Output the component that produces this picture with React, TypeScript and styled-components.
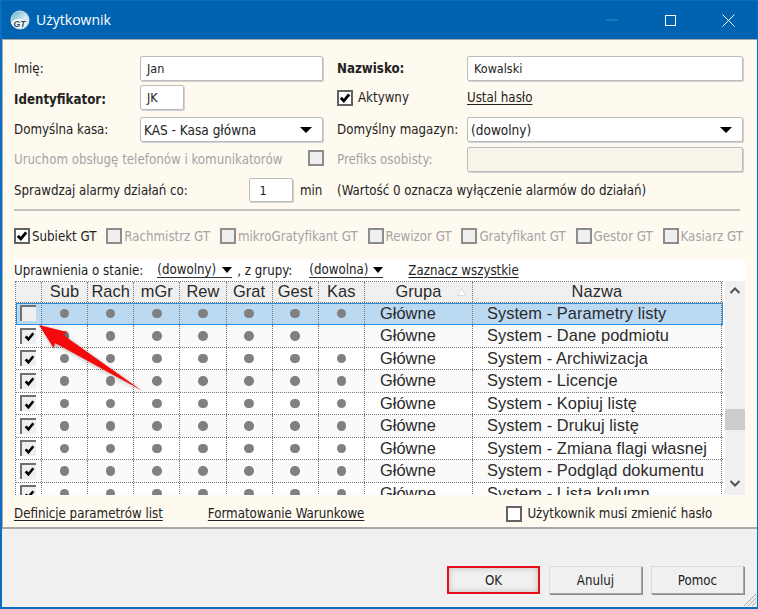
import React from "react";
import styled, { createGlobalStyle } from "styled-components";

const Global = createGlobalStyle`
  html, body { margin: 0; padding: 0; overflow: hidden; background: #f0f0f0; }
  * { box-sizing: border-box; }
`;

const UI = `"DejaVu Sans Condensed", "DejaVu Sans", sans-serif`;
const GRID = `"Liberation Sans", Arial, sans-serif`;

const Win = styled.div`
  position: relative;
  width: 758px;
  height: 609px;
  display: flex;
  flex-direction: column;
  border: solid #0a6fc2;
  border-width: 1px 1px 2px 2px;
  background: #f0f0f0;
  font-family: ${UI};
  font-size: 13.2px;
  color: #222;
  overflow: hidden;
`;
const TitleBar = styled.div`
  height: 38px;
  flex: none;
  background: #0063b1;
  color: #fff;
  display: flex;
  align-items: center;
  padding-left: 8px;
`;
const TitleText = styled.span`
  font-family: "Open Sans", sans-serif;
  font-size: 14px;
  margin: -2px 0 0 6px;
  flex: 1;
`;
const WinBtn = styled.div`
  width: 58px;
  height: 38px;
  display: flex;
  align-items: center;
  justify-content: center;
`;
const Panel = styled.div`
  flex: none;
  height: 490px;
  background: #fffaf0;
  border: 1px solid #a8a8a8;
  border-width: 1px 0 2px 1px;
  display: flex;
  flex-direction: column;
  padding: 16px 12px 0 11px;
`;
const Form = styled.div`
  display: grid;
  grid-template-columns: 126px 183px 14px 130px 276px;
  grid-template-rows: 29px 32px 30px 31px 24px;
  width: 729px;
`;
const Label = styled.div<{ $bold?: boolean; $off?: boolean; $dy?: number; $w?: number; $wide?: boolean }>`
  height: 24px;
  line-height: 25px;
  white-space: nowrap;
  font-weight: ${(p) => (p.$bold ? 700 : 400)};
  color: ${(p) => (p.$off ? "#a4a4a4" : "#222")};
  margin-top: ${(p) => p.$dy ?? 0}px;
  ${(p) => (p.$w ? `width: ${p.$w}px;` : "")}
  ${(p) => (p.$wide ? "grid-column: 4 / span 2;" : "")}
`;
const Field = styled.div<{ $w?: number; $off?: boolean }>`
  height: 100%;
  max-height: 25px;
  width: ${(p) => (p.$w ? `${p.$w}px` : "100%")};
  background: ${(p) => (p.$off ? "#f8f4ea" : "#fff")};
  border: 1px solid #bcbcbc;
  border-radius: 2px;
  box-shadow: 1px 1px 0 #d0d0d0;
  padding: 0 6px;
  display: flex;
  align-items: center;
  font-size: 12.5px;
  white-space: nowrap;
`;
const SelectField = styled(Field)`
  padding: 0 10px 0 3px;
  justify-content: space-between;
  font-size: 13.5px;
`;
const Arrow = styled.span`
  width: 0;
  height: 0;
  border-left: 6px solid transparent;
  border-right: 6px solid transparent;
  border-top: 6px solid #000;
`;
const Span2 = styled.div<{ $between?: boolean }>`
  grid-column: span 3;
  display: flex;
  align-items: flex-start;
  justify-content: ${(p) => (p.$between ? "space-between" : "flex-start")};
  padding-right: ${(p) => (p.$between ? "13px" : 0)};
`;
const Row = styled.div<{ $ml?: number }>`
  display: flex;
  align-items: center;
  gap: 5px;
  height: 25px;
  white-space: nowrap;
  margin-left: ${(p) => p.$ml ?? 0}px;
`;
const Box = styled.span<{ $off?: boolean; $dy?: number }>`
  width: 16px;
  height: 16px;
  flex: none;
  border: 2.5px solid ${(p) => (p.$off ? "#8c8c8c" : "#626262")};
  background: ${(p) => (p.$off ? "#efefef" : "#fff")};
  display: inline-flex;
  align-items: center;
  justify-content: center;
  margin-top: ${(p) => p.$dy ?? 0}px;
`;
const A = styled.span`
  text-decoration: underline;
  text-underline-offset: 2px;
  white-space: nowrap;
  color: #222;
`;
const Sep = styled.div`
  height: 2px;
  width: 726px;
  margin: 7px 0 0 0;
  background: #c4c4bc;
`;
const Modules = styled.div`
  display: flex;
  justify-content: space-between;
  width: 729px;
  margin-top: 16px;
  height: 19px;
`;
const Mod = styled.div<{ $off?: boolean }>`
  display: flex;
  align-items: center;
  gap: 2px;
  white-space: nowrap;
  color: ${(p) => (p.$off ? "#a4a4a4" : "#222")};
`;
const White = styled.div`
  margin-top: 14px;
  width: 731px;
  background: #fff;
  display: flex;
  flex-direction: column;
`;
const Tools = styled.div`
  height: 21px;
  background: #fff;
  display: flex;
  align-items: center;
  white-space: nowrap;
`;
const DropLink = styled.span<{ $w: number; $ml: number }>`
  width: ${(p) => p.$w}px;
  margin-left: ${(p) => p.$ml}px;
  border-bottom: 1.5px solid #333;
  display: inline-flex;
  align-items: center;
  justify-content: space-between;
  line-height: 15px;
`;
const MiniArrow = styled.span`
  width: 0;
  height: 0;
  border-left: 5px solid transparent;
  border-right: 5px solid transparent;
  border-top: 6px solid #000;
`;
const Plain = styled.span<{ $ml?: number }>`
  margin-left: ${(p) => p.$ml ?? 0}px;
`;
const LinkAt = styled(A)<{ $ml: number }>`
  margin-left: ${(p) => p.$ml}px;
`;
const ListArea = styled.div`
  display: flex;
  height: 214px;
  gap: 2px;
  padding-left: 1px;
`;
const Table = styled.div`
  width: 708px;
  height: 214px;
  overflow: hidden;
  font-family: ${GRID};
  font-size: 16.4px;
  letter-spacing: 0.08px;
  color: #2a2a2a;
  border-left: 1px dotted #777;
  border-top: 1px dotted #777;
`;
const TR = styled.div<{ $sel?: boolean; $alt?: boolean; $head?: boolean }>`
  display: grid;
  grid-template-columns: 26px repeat(7, 46.14px) 108px 249px;
  height: ${(p) => (p.$head ? "21px" : "22.5px")};
  background: ${(p) => (p.$head ? "#f0f0f0" : p.$sel ? "#bcd9f2" : p.$alt ? "#fafafa" : "#fff")};
  ${(p) => (p.$sel ? "outline: 1px solid #2b8de0; outline-offset: -1px;" : "")}
  border-bottom: 1px dotted #777;
`;
const TD = styled.div<{ $left?: boolean; $pl?: number }>`
  position: relative;
  border-right: 1px dotted #777;
  display: flex;
  align-items: center;
  justify-content: ${(p) => (p.$left ? "flex-start" : "center")};
  padding-left: ${(p) => p.$pl ?? 0}px;
  white-space: nowrap;
  overflow: hidden;
`;
const Dot = styled.span`
  width: 9.5px;
  height: 9.5px;
  border-radius: 50%;
  background: #808080;
`;
const Tick = styled.span`
  width: 16px;
  height: 16px;
  border: solid #707070;
  border-width: 2.5px 0 0 2.5px;
  background: #efefef;
  display: flex;
  align-items: center;
  justify-content: center;
`;
const Sort = styled.svg`
  position: absolute;
  right: 6px;
  top: 6px;
`;
const Scroll = styled.div`
  width: 20px;
  height: 214px;
  background: #f0f0f0;
  position: relative;
  display: flex;
  flex-direction: column;
  align-items: center;
  justify-content: space-between;
  padding: 5px 0 7px;
`;
const Thumb = styled.div`
  position: absolute;
  left: 0;
  right: 0;
  top: 128px;
  height: 21px;
  background: #cdcdcd;
`;
const Footer = styled.div`
  display: flex;
  align-items: center;
  height: 33px;
  padding-top: 6px;
`;
const Bottom = styled.div`
  flex: 1;
  display: flex;
  justify-content: flex-end;
  align-items: flex-start;
  gap: 9px;
  padding: 37px 13px 0 0;
  position: relative;
`;
const Btn = styled.div<{ $red?: boolean }>`
  width: 93px;
  height: 28px;
  background: #f0f0f0;
  border: ${(p) => (p.$red ? "2px solid #e3101a" : "1px solid #a6a6a6")};
  border-top-color: ${(p) => (p.$red ? "#e3101a" : "#dcdcdc")};
  border-left-color: ${(p) => (p.$red ? "#e3101a" : "#dcdcdc")};
  box-shadow: ${(p) => (p.$red ? "inset 0 0 6px #bdbdbd" : "1px 1px 0 #8c8c8c")};
  display: flex;
  align-items: center;
  justify-content: center;
`;
const Grip = styled.svg`
  position: absolute;
  right: 0;
  bottom: 0;
`;
const Overlay = styled.svg`
  position: absolute;
  left: -2px;
  top: -1px;
  pointer-events: none;
  filter: drop-shadow(2px 2px 2px rgba(0, 0, 0, 0.3));
`;

const Check = ({ s = 12 }: { s?: number }) => (
  <svg width={s} height={s} viewBox="0 0 12 12">
    <path d="M1.800 5.800 L4.800 9 L10.200 2.400" fill="none" stroke="#000" strokeWidth="2.800" />
  </svg>
);

const Logo = () => (
  <svg width="20" height="20" viewBox="0 0 21 21">
    <defs>
      <linearGradient id="lg" x1="0" y1="0" x2="1" y2="1">
        <stop offset="0" stopColor="#4fb0c8" />
        <stop offset="0.55" stopColor="#cfe6ee" />
        <stop offset="1" stopColor="#f4f4f4" />
      </linearGradient>
    </defs>
    <circle cx="10.500" cy="10.500" r="9.500" fill="url(#lg)" stroke="#d8dde0" />
    <ellipse cx="9" cy="14" rx="7.500" ry="4.600" fill="#f3f3f3" />
    <text x="10" y="17.500" fontSize="9" fontWeight="700" fontStyle="italic" fontFamily="Liberation Sans" textAnchor="middle" fill="#2c4a66">GT</text>
  </svg>
);

const names = [
  "Parametry listy",
  "Dane podmiotu",
  "Archiwizacja",
  "Licencje",
  "Kopiuj listę",
  "Drukuj listę",
  "Zmiana flagi własnej",
  "Podgląd dokumentu",
  "Lista kolumn",
];
const heads = ["Sub", "Rach", "mGr", "Rew", "Grat", "Gest", "Kas"];
const mods = ["Rachmistrz GT", "mikroGratyfikant GT", "Rewizor GT", "Gratyfikant GT", "Gestor GT", "Kasiarz GT"];

export default function App() {
  return (
    <>
      <Global />
      <Win>
        <TitleBar>
          <Logo />
          <TitleText>Użytkownik</TitleText>
          <WinBtn>
            <svg width="12" height="12" viewBox="0 0 12 12"><path d="M0 6h12" stroke="#3d8ac6" /></svg>
          </WinBtn>
          <WinBtn>
            <svg width="11" height="11" viewBox="0 0 11 11"><rect x="0.500" y="0.500" width="10" height="10" fill="none" stroke="#fff" /></svg>
          </WinBtn>
          <WinBtn>
            <svg width="13" height="13" viewBox="0 0 13 13"><path d="M.5.5l12 12M12.500.5l-12 12" stroke="#fff" /></svg>
          </WinBtn>
        </TitleBar>
        <Panel>
          <Form>
            <Label>Imię:</Label>
            <Field>Jan</Field>
            <span />
            <Label $bold>Nazwisko:</Label>
            <Field>Kowalski</Field>

            <Label $bold $dy={2}>Identyfikator:</Label>
            <Field $w={44}>JK</Field>
            <span />
            <Row>
              <Box><Check /></Box>
              <span>Aktywny</span>
            </Row>
            <Row><A>Ustal hasło</A></Row>

            <Label>Domyślna kasa:</Label>
            <SelectField>KAS - Kasa główna<Arrow /></SelectField>
            <span />
            <Label>Domyślny magazyn:</Label>
            <SelectField>(dowolny)<Arrow /></SelectField>

            <Span2 $between>
              <Label $off>Uruchom obsługę telefonów i komunikatorów</Label>
              <Box $off $dy={3} />
            </Span2>
            <Label $off>Prefiks osobisty:</Label>
            <Field $off />

            <Span2>
              <Label $w={235}>Sprawdzaj alarmy działań co:</Label>
              <Field $w={44}>&nbsp;1</Field>
              <Plain $ml={7}><Label>min</Label></Plain>
            </Span2>
            <Label $wide>(Wartość 0 oznacza wyłączenie alarmów do działań)</Label>
          </Form>
          <Sep />
          <Modules>
            <Mod>
              <Box><Check /></Box>
              Subiekt GT
            </Mod>
            {mods.map((m) => (
              <Mod $off key={m}>
                <Box $off />
                {m}
              </Mod>
            ))}
          </Modules>
          <White>
            <Tools>
              <Plain>Uprawnienia o stanie:</Plain>
              <DropLink $w={75} $ml={14}>(dowolny)<MiniArrow /></DropLink>
              <Plain $ml={5}>, z grupy:</Plain>
              <DropLink $w={74} $ml={17}>(dowolna)<MiniArrow /></DropLink>
              <LinkAt $ml={25}>Zaznacz wszystkie</LinkAt>
            </Tools>
            <ListArea>
              <Table>
                <TR $head>
                  <TD />
                  {heads.map((h) => <TD key={h}>{h}</TD>)}
                  <TD>
                    Grupa
                    <Sort width="9" height="8" viewBox="0 0 9 8"><path d="M4.500 0.500L8.500 7.500H0.500Z" fill="#fff" stroke="#d8d8d8" /></Sort>
                  </TD>
                  <TD>Nazwa</TD>
                </TR>
                {names.map((n, i) => (
                  <TR key={n} $sel={i === 0} $alt={i % 2 === 1}>
                    <TD $left $pl={4}>
                      <Tick>{i > 0 && <Check s={11} />}</Tick>
                    </TD>
                    {heads.map((h) => (
                      <TD key={h}>{i === 1 && h === "Kas" ? null : <Dot />}</TD>
                    ))}
                    <TD $left $pl={15}>Główne</TD>
                    <TD $left $pl={14}>System - {n}</TD>
                  </TR>
                ))}
              </Table>
              <Scroll>
                <svg width="12" height="9" viewBox="0 0 12 9"><path d="M1.500 7L6 2.500L10.500 7" fill="none" stroke="#505050" strokeWidth="2" /></svg>
                <Thumb />
                <svg width="12" height="9" viewBox="0 0 12 9"><path d="M1.500 2L6 6.500L10.500 2" fill="none" stroke="#505050" strokeWidth="2" /></svg>
              </Scroll>
            </ListArea>
          </White>
          <Footer>
            <A>Definicje parametrów list</A>
            <LinkAt $ml={45}>Formatowanie Warunkowe</LinkAt>
            <Row $ml={142}>
              <Box />
              <span>Użytkownik musi zmienić hasło</span>
            </Row>
          </Footer>
        </Panel>
        <Bottom>
          <Btn $red>OK</Btn>
          <Btn>Anuluj</Btn>
          <Btn>Pomoc</Btn>
          <Grip width="16" height="16" viewBox="0 0 16 16">
            <path d="M15 3L3 15M15 7L7 15M15 11L11 15" stroke="#a8a8a8" />
          </Grip>
        </Bottom>
        <Overlay width="758" height="609" viewBox="0 0 758 609">
          <path d="M39 325L67 332L63.300 335L141.700 390.500L55 343L53.500 348Z" fill="#f40a0a" />
        </Overlay>
      </Win>
    </>
  );
}
